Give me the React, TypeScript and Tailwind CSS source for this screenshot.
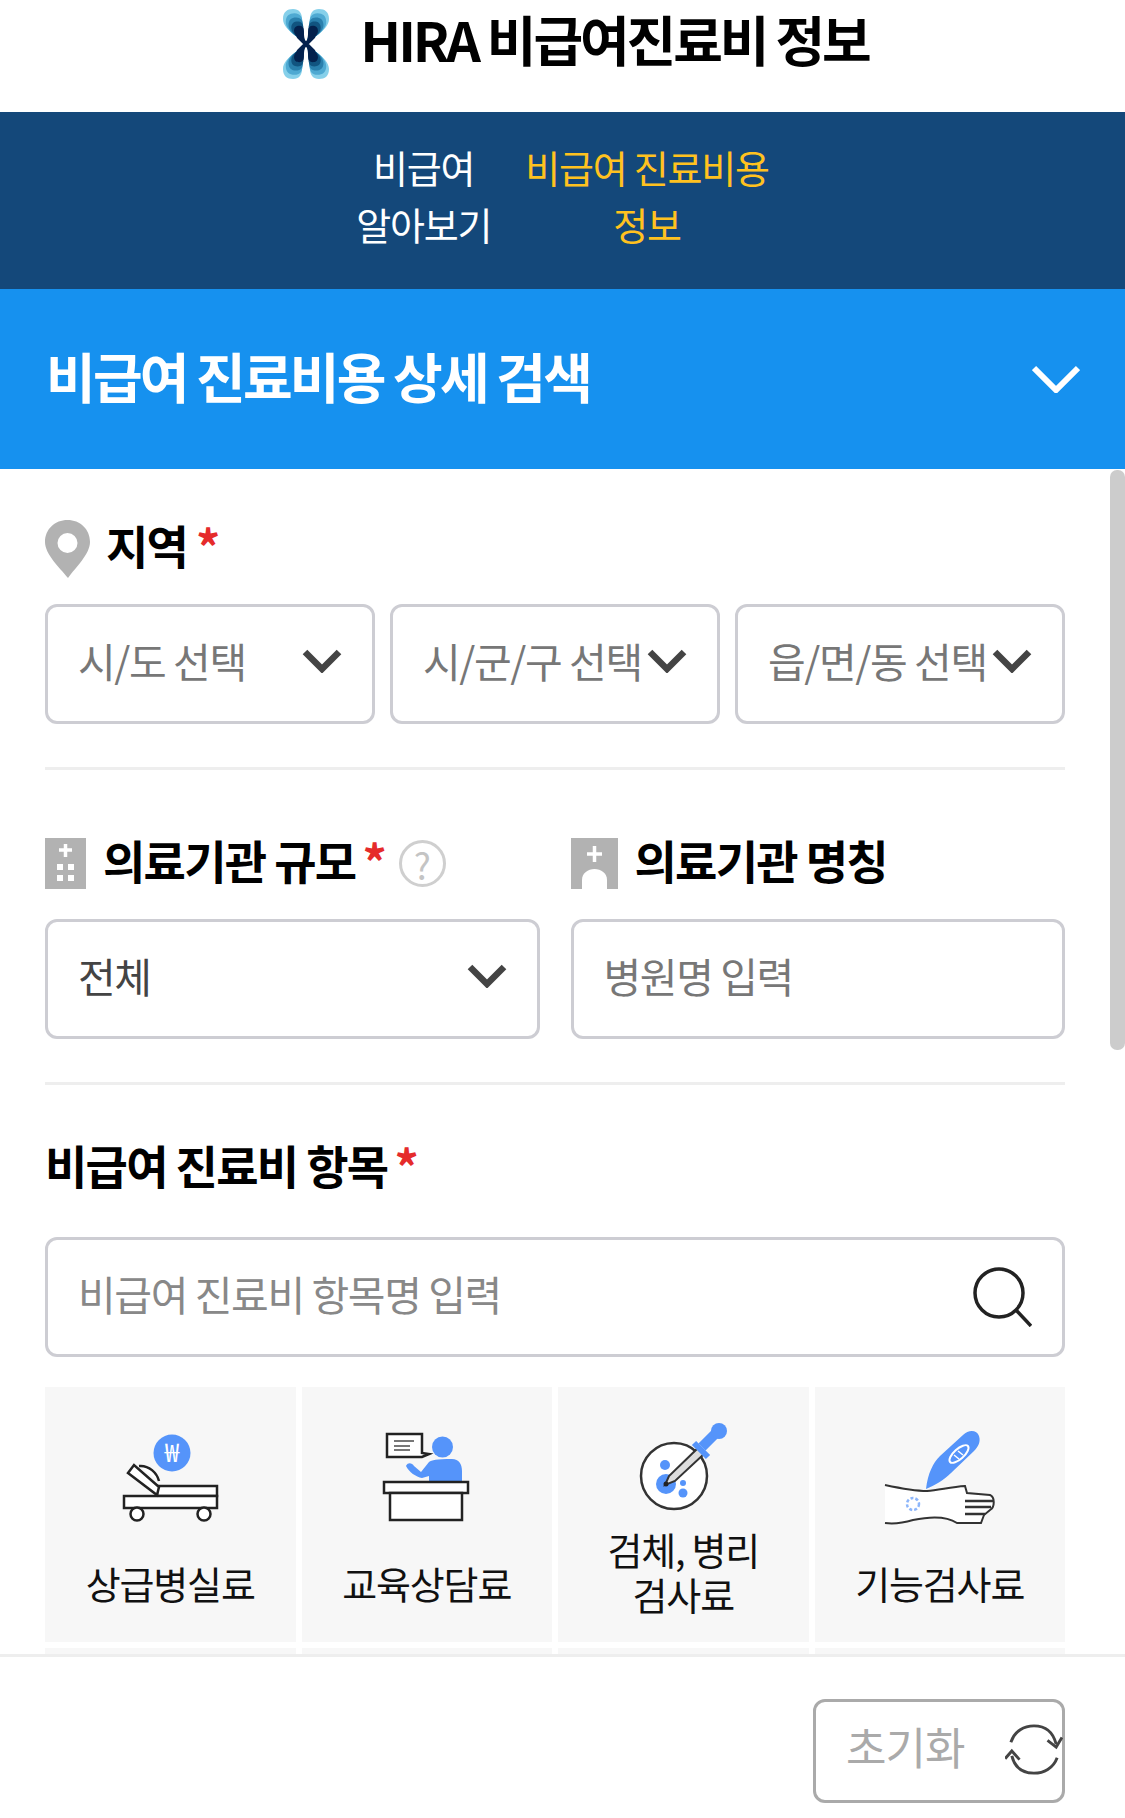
import React from 'react'

function Chevron({ className = 'w-[40px] h-[24px] shrink-0' }: { className?: string }) {
  return (
    <svg viewBox="0 0 40 24" className={className} fill="none">
      <path d="M3 3 L20 20 L37 3" stroke="#444" strokeWidth="6.5" strokeLinejoin="miter" />
    </svg>
  )
}

function Star() {
  return <span className="block mt-[1px] text-[#e52b2b] text-[48px] leading-none font-bold tracking-normal">*</span>
}

function Logo() {
  const lobe = 'M0 0 C-3 -5 -23 -13 -23 -25 C-23 -32 -19 -35 -13 -35 C-7 -35 -4 -31 -4 -25 C-4 -15 -3 -6 0 0 Z'
  const layers = [
    { s: 1, c: '#86d0ea' },
    { s: 0.88, c: '#4ea9d2' },
    { s: 0.76, c: '#2a80ad' },
    { s: 0.64, c: '#115480' },
    { s: 0.52, c: '#04214d' },
  ]
  return (
    <svg viewBox="-23 -35 46 70" className="w-[46px] h-[70px] shrink-0">
      {[[1, 1], [-1, 1], [1, -1], [-1, -1]].map(([x, y], i) => (
        <g key={i} transform={`scale(${x} ${y})`}>
          {layers.map((l) => (
            <path key={l.s} d={lobe} fill={l.c} transform={`scale(${l.s})`} />
          ))}
        </g>
      ))}
      <path d="M-8 -8 L8 8 M8 -8 L-8 8" stroke="#04214d" strokeWidth="4" />
    </svg>
  )
}

function BedIcon() {
  return (
    <svg viewBox="0 0 110 100" className="w-[110px] h-[100px] overflow-visible">
      <circle cx="57" cy="30" r="18.5" fill="#5594fa" />
      <text x="57" y="39" textAnchor="middle" fontSize="26" fill="#fff" fontFamily="Noto Sans CJK KR">₩</text>
      <rect x="42" y="63" width="60" height="10" fill="#fff" stroke="#222" strokeWidth="2.5" />
      <rect x="9" y="73" width="93" height="12" fill="#fff" stroke="#222" strokeWidth="2.5" />
      <path d="M13 50 L19 42 L44 64 L42 72 Z" fill="#fff" stroke="#222" strokeWidth="2.5" />
      <path d="M24 43 C34 42 42 50 44 58" fill="#fff" stroke="#222" strokeWidth="2.5" />
      <circle cx="22" cy="91" r="6.5" fill="#fff" stroke="#222" strokeWidth="2.5" />
      <circle cx="89" cy="91" r="6.5" fill="#fff" stroke="#222" strokeWidth="2.5" />
    </svg>
  )
}

function DeskIcon() {
  return (
    <svg viewBox="0 0 110 100" className="w-[110px] h-[100px] overflow-visible">
      <circle cx="70.5" cy="24" r="10.5" fill="#5594fa" />
      <path d="M34 43 C36 39 40 40 42 43 L49 49 L57 39 C60 37 64 36 80 36 C87 36 90 41 90 48 L90 60 L57 60 L57 53 L50 55 C44 54 37 49 34 43 Z" fill="#5594fa" />
      <path d="M15 11 H50 V30 L57 31 L50 34 H15 Z" fill="#fff" stroke="#222" strokeWidth="2.5" />
      <path d="M22 18 H42 M22 23 H38 M22 27 H38" stroke="#777" strokeWidth="2" />
      <rect x="12" y="59" width="84" height="11" fill="#fff" stroke="#222" strokeWidth="2.5" />
      <rect x="18" y="70" width="72" height="27" fill="#fff" stroke="#222" strokeWidth="2.5" />
    </svg>
  )
}

function DropperIcon() {
  return (
    <svg viewBox="0 0 110 100" className="w-[110px] h-[100px] overflow-visible">
      <circle cx="46" cy="53" r="33" fill="#fff" stroke="#333" strokeWidth="2.5" />
      <circle cx="37" cy="42" r="5" fill="#5594fa" />
      <circle cx="38" cy="61" r="10" fill="#5594fa" />
      <circle cx="55" cy="70" r="4.5" fill="#5594fa" />
      <circle cx="55" cy="60" r="3" fill="#5594fa" />
      <path d="M37 62 L41 53 L70 25 L76 31 L47 58 Z" fill="#ddd" stroke="#333" strokeWidth="2" />
      <path d="M66 20 L80 34" stroke="#5594fa" strokeWidth="6" />
      <path d="M74 24 L88 10" stroke="#5594fa" strokeWidth="10" />
      <circle cx="91" cy="8" r="8" fill="#5594fa" />
      <circle cx="38" cy="61" r="2.5" fill="#222" />
    </svg>
  )
}

function ArmIcon() {
  return (
    <svg viewBox="0 0 110 100" className="w-[110px] h-[100px] overflow-visible">
      <path d="M0 62 C14 65 30 68 42 68 C54 67 66 64 80 63 L82 70 L105 72 C110 74 110 84 105 87 L96 100 L72 100 C60 92 42 94 28 97 C18 100 8 101 0 100 Z" fill="#fff" />
      <path d="M0 62 C14 65 30 68 42 68 C54 67 66 64 80 63 L82 70 L105 72 C110 74 110 84 105 87 L99 92 L96 100 L72 100 C60 92 42 94 28 97 C18 100 8 101 0 100" fill="none" stroke="#333" strokeWidth="2" />
      <path d="M80 78 H108 M80 84 H106 M80 91 H100" stroke="#333" strokeWidth="2.5" />
      <path d="M41 66 C43 50 48 40 55 33 L78 12 C84 6 92 7 94 13 C96 19 93 24 89 28 L66 50 C58 58 50 62 41 66 Z" fill="#5594fa" />
      <ellipse cx="74" cy="31" rx="12" ry="5" transform="rotate(-42 74 31)" fill="none" stroke="#fff" strokeWidth="2" />
      <path d="M69 32 L74 36 M73 28 L78 32" stroke="#fff" strokeWidth="1.5" />
      <circle cx="28" cy="81" r="6" fill="none" stroke="#8db6fb" strokeWidth="2.5" strokeDasharray="3 2" />
    </svg>
  )
}

function Cell({ icon, children, twoLine = false }: { icon: React.ReactNode; children: React.ReactNode; twoLine?: boolean }) {
  return (
    <div className="h-[255px] bg-[#f7f7f7] flex flex-col items-center">
      <div className="mt-[36px] h-[100px] w-[110px]">{icon}</div>
      <div className={`flex-1 flex items-center justify-center text-center text-[38px] leading-[45px] tracking-[-1.2px] text-[#111] font-normal ${twoLine ? 'pb-[23px]' : ''}`}>
        {children}
      </div>
    </div>
  )
}

export default function App() {
  return (
    <div className="relative h-[1818px] overflow-hidden bg-white flex flex-col font-['Noto_Sans_CJK_KR','Liberation_Sans',sans-serif]">
      {/* Header */}
      <header className="h-[112px] shrink-0 flex justify-center items-start pt-[9px] pl-[27px] gap-[31px]">
        <Logo />
        <h1 className="text-[54px] leading-[62px] -mt-[1px] font-bold tracking-[-3.1px] text-black whitespace-nowrap">HIRA 비급여진료비 정보</h1>
      </header>

      {/* Nav */}
      <nav className="h-[177px] shrink-0 bg-[#14487a] flex justify-center gap-[34px] pt-[26px] text-[38px] leading-[57px] tracking-[-1.2px] text-center">
        <div className="text-white">비급여<br />알아보기</div>
        <div className="text-[#ffc21f]">비급여 진료비용<br />정보</div>
      </nav>

      {/* Search title */}
      <div className="h-[180px] shrink-0 bg-[#1691ef] flex items-center justify-between pl-[46px] pr-[45px]">
        <h2 className="text-[54px] font-bold text-white tracking-[-2.8px] leading-none mb-[7px]">비급여 진료비용 상세 검색</h2>
        <svg viewBox="0 0 48 28" className="w-[48px] h-[28px]" fill="none">
          <path d="M2 3 L24 25 L46 3" stroke="#fff" strokeWidth="6" />
        </svg>
      </div>

      {/* Form */}
      <main className="flex-1 overflow-hidden pl-[45px] pr-[60px] pt-[51px]">
        <div className="h-[58px] flex items-center">
          <svg viewBox="0 0 45 58" className="w-[45px] h-[58px] shrink-0">
            <path fillRule="evenodd" d="M22.5 0 C35 0 45 9 45 22 C45 34 31 47 23 58 C14 47 0 34 0 22 C0 9 10 0 22.5 0 Z M22.5 13 A10 10 0 1 0 22.5 33 A10 10 0 1 0 22.5 13 Z" fill="#b2b2b2" />
          </svg>
          <span className="ml-[16px] mb-[11px] text-[46px] leading-none font-bold text-black tracking-[-1.8px]">지역</span>
          <span className="ml-[9px] self-start"><Star /></span>
        </div>

        <div className="mt-[26px] grid grid-cols-3 gap-[15px] text-[41px] tracking-[-1.4px] text-[#777]">
          {['시/도 선택', '시/군/구 선택', '읍/면/동 선택'].map((t) => (
            <div key={t} className="h-[120px] border-[3px] border-[#cdcdd3] rounded-[12px] pl-[30px] pr-[30px] pb-[6px] flex items-center justify-between whitespace-nowrap">
              <span>{t}</span>
              <Chevron />
            </div>
          ))}
        </div>

        <div className="mt-[43px] h-[3px] bg-[#eeeeee]" />

        <div className="mt-[68px] grid grid-cols-2 gap-[31px]">
          <div className="h-[51px] flex items-center">
            <svg viewBox="0 0 41 51" className="w-[41px] h-[51px] shrink-0">
              <rect width="41" height="51" fill="#b2b2b2" />
              <path d="M20.5 6 V19 M14 12 H27" stroke="#fff" strokeWidth="3.5" />
              <path d="M12 26 H18 V32 H12 Z M23 26 H29 V32 H23 Z M12 37 H18 V43 H12 Z M23 37 H29 V43 H23 Z" fill="#fff" />
            </svg>
            <span className="ml-[17px] mb-[10px] text-[46px] leading-none font-bold text-black tracking-[-1.7px] whitespace-nowrap">의료기관 규모</span>
            <span className="ml-[7px] -mt-[3px] self-start"><Star /></span>
            <span className="ml-[12px] w-[47px] h-[47px] shrink-0 rounded-full border-[3px] border-[#cfcfcf] flex items-center justify-center text-[36px] text-[#c4c4c4] leading-none">?</span>
          </div>
          <div className="h-[51px] flex items-center">
            <svg viewBox="0 0 47 51" className="w-[47px] h-[51px] shrink-0">
              <rect width="47" height="51" fill="#b2b2b2" />
              <path d="M23.5 8 V24 M16 16 H31" stroke="#fff" strokeWidth="3.5" />
              <path d="M11 51 V42 C11 35 17 31 23.5 31 C30 31 36 35 36 42 V51 Z" fill="#fff" />
            </svg>
            <span className="ml-[17px] mb-[10px] text-[46px] leading-none font-bold text-black tracking-[-1.7px] whitespace-nowrap">의료기관 명칭</span>
          </div>
        </div>

        <div className="mt-[30px] grid grid-cols-2 gap-[31px] text-[41px] tracking-[-1.4px]">
          <div className="h-[120px] border-[3px] border-[#cdcdd3] rounded-[12px] pl-[30px] pr-[30px] pb-[6px] flex items-center justify-between text-[#444]">
            <span>전체</span>
            <Chevron />
          </div>
          <div className="h-[120px] border-[3px] border-[#cdcdd3] rounded-[12px] pl-[30px] pb-[6px] flex items-center text-[#777]">
            <span>병원명 입력</span>
          </div>
        </div>

        <div className="mt-[43px] h-[3px] bg-[#eeeeee]" />

        <div className="mt-[58px] h-[50px] flex items-center">
          <span className="mb-[9px] text-[46px] leading-none font-bold text-black tracking-[-1.7px]">비급여 진료비 항목</span>
          <span className="ml-[7px] -mt-[3px] self-start"><Star /></span>
        </div>

        <div className="mt-[44px] h-[120px] border-[3px] border-[#cdcdd3] rounded-[12px] pl-[30px] pr-[30px] flex items-center justify-between text-[41px] tracking-[-1.4px] text-[#888]">
          <span className="pb-[6px]">비급여 진료비 항목명 입력</span>
          <svg viewBox="0 0 60 60" className="w-[60px] h-[60px] shrink-0" fill="none">
            <circle cx="27" cy="26" r="24" stroke="#222" strokeWidth="3.5" />
            <path d="M44 43 L59 59" stroke="#222" strokeWidth="3.5" />
          </svg>
        </div>

        <div className="mt-[30px] grid grid-cols-4 gap-[6px]">
          <Cell icon={<BedIcon />}>상급병실료</Cell>
          <Cell icon={<DeskIcon />}>교육상담료</Cell>
          <Cell icon={<DropperIcon />} twoLine>검체, 병리<br />검사료</Cell>
          <Cell icon={<ArmIcon />}>기능검사료</Cell>
          <div className="h-[255px] bg-[#f7f7f7]" />
          <div className="h-[255px] bg-[#f7f7f7]" />
          <div className="h-[255px] bg-[#f7f7f7]" />
          <div className="h-[255px] bg-[#f7f7f7]" />
        </div>
      </main>

      {/* Footer */}
      <footer className="h-[164px] shrink-0 border-t-[3px] border-[#eeeeee] bg-white flex justify-end pr-[60px] pt-[42px]">
        <button className="w-[252px] h-[104px] border-[3px] border-[#aaaaaa] rounded-[12px] pl-[30px] pb-[10px] flex items-center relative text-[44px] text-[#aaaaaa] tracking-[-1px]">
          초기화
          <svg viewBox="0 0 60 56" className="absolute right-[-1px] top-[21px] w-[58px] h-[54px]" fill="none">
            <path d="M6 20 C10 8 20 3 30 3 C42 3 50 10 53 22" stroke="#444" strokeWidth="3" />
            <path d="M44 18 L53 25 L59 15" stroke="#444" strokeWidth="3" />
            <path d="M54 36 C50 47 40 52 30 52 C18 52 10 46 7 34" stroke="#444" strokeWidth="3" />
            <path d="M0 37 L7 29 L15 38" stroke="#444" strokeWidth="3" />
          </svg>
        </button>
      </footer>

      {/* Scrollbar */}
      <div className="absolute left-[1110px] top-[470px] w-[15px] h-[580px] bg-[#cccccc] rounded-[7px]" />
    </div>
  )
}
